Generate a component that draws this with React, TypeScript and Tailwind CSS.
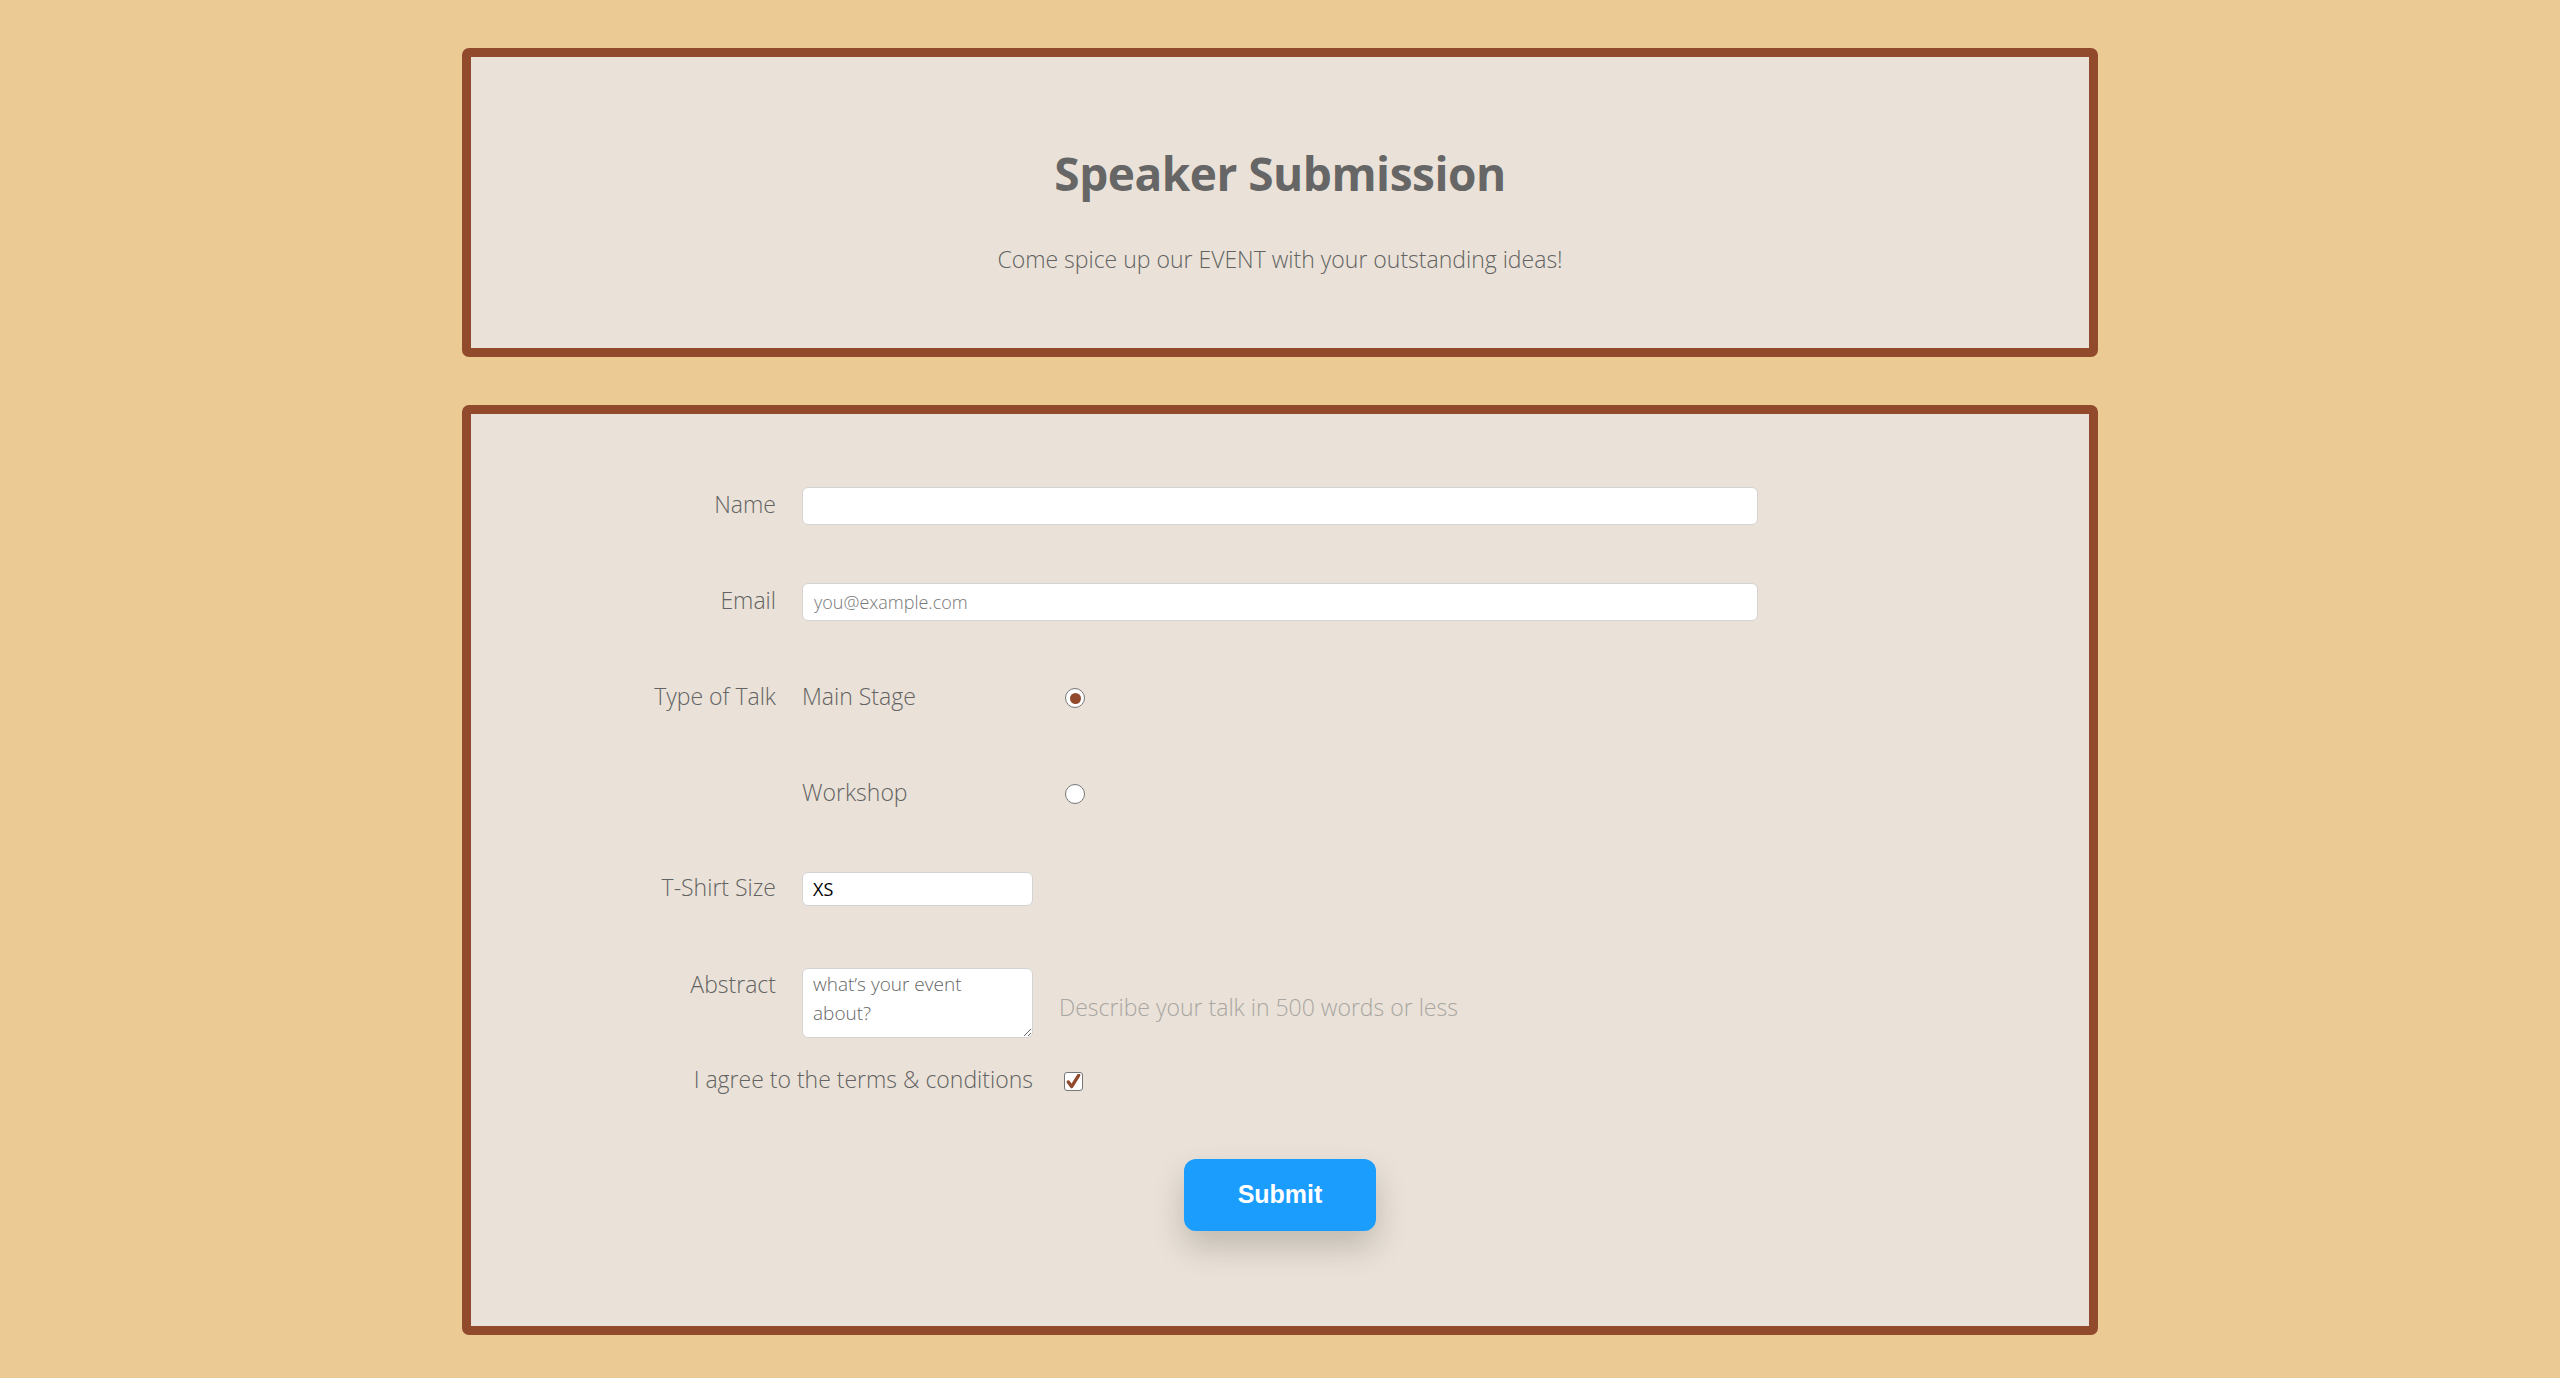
import { useState } from "react";

const font = { fontFamily: '"Open Sans", "Noto Sans", sans-serif' };

function Radio({ checked, onClick }: { checked: boolean; onClick: () => void }) {
  return (
    <button
      type="button"
      onClick={onClick}
      className="ml-[6px] w-[20px] h-[20px] rounded-full border-[1.5px] border-[#767676] bg-white grid place-items-center"
    >
      {checked ? <span className="w-[11px] h-[11px] rounded-full bg-[#924a2d]" /> : null}
    </button>
  );
}

export default function App() {
  const [talk, setTalk] = useState("main");
  const [agree, setAgree] = useState(true);

  return (
    <div className="min-h-[1378px] bg-[#ebcb93] pt-[48px] pb-[43px] text-[#636363]" style={font}>
      {/* header card */}
      <div className="mx-auto w-[1636px] h-[309px] border-[9px] border-[#924a2d] rounded-[7px] bg-[#eae2d8] flex flex-col items-center pt-[86px]">
        <h1 className="text-[46px] leading-[60px] font-bold tracking-[-0.5px] text-[#666]">Speaker Submission</h1>
        <p className="mt-[40px] text-[23px] leading-[32px] font-light">
          Come spice up our EVENT with your outstanding ideas!
        </p>
      </div>

      {/* form card */}
      <div className="mx-auto mt-[48px] w-[1636px] h-[930px] border-[9px] border-[#924a2d] rounded-[7px] bg-[#eae2d8] pt-[73px]">
        <form className="flex flex-col text-[23px] font-light">
          <div className="grid grid-cols-[305px_956px] gap-x-[26px] items-center h-[38px]">
            <label className="text-right pb-[3px]">Name</label>
            <input className="h-[38px] rounded-[6px] border border-[#d3d3d3] bg-white px-[11px] text-[18px] outline-none" />
          </div>

          <div className="mt-[58px] grid grid-cols-[305px_956px] gap-x-[26px] items-center h-[38px]">
            <label className="text-right pb-[3px]">Email</label>
            <input
              placeholder="you@example.com"
              className="h-[38px] rounded-[6px] border border-[#d3d3d3] bg-white px-[11px] text-[18px] placeholder:text-[#777] outline-none"
            />
          </div>

          <div className="mt-[58px] grid grid-cols-[305px_231px_700px] gap-x-[26px] items-center h-[38px]">
            <label className="text-right pb-[3px]">Type of Talk</label>
            <span className="pb-[3px]">Main Stage</span>
            <div className="flex items-center">
              <Radio checked={talk === "main"} onClick={() => setTalk("main")} />
            </div>
          </div>

          <div className="mt-[58px] grid grid-cols-[305px_231px_700px] gap-x-[26px] items-center h-[38px]">
            <span />
            <span className="pb-[3px]">Workshop</span>
            <div className="flex items-center">
              <Radio checked={talk === "workshop"} onClick={() => setTalk("workshop")} />
            </div>
          </div>

          <div className="mt-[57px] grid grid-cols-[305px_231px_700px] gap-x-[26px] items-center h-[38px]">
            <label className="text-right pb-[3px]">T-Shirt Size</label>
            <div className="h-[34px] rounded-[6px] border border-[#d3d3d3] bg-white px-[10px] flex items-center text-[18px] font-normal text-black">
              XS
            </div>
            <span />
          </div>

          <div className="mt-[60px] grid grid-cols-[305px_231px_700px] gap-x-[26px] items-start">
            <label className="text-right leading-[32px]">Abstract</label>
            <textarea
              placeholder="what’s your event about?"
              className="h-[70px] rounded-[6px] border border-[#d3d3d3] bg-white px-[10px] py-[1px] text-[19px] leading-[29px] placeholder:text-[#666] outline-none resize"
            />
            <span className="pt-[23px] leading-[32px] text-[#a9a6a2]">Describe your talk in 500 words or less</span>
          </div>

          <div className="mt-[24px] grid grid-cols-[562px_700px] gap-x-[26px] items-center h-[38px]">
            <label className="text-right pb-[3px]">I agree to the terms &amp; conditions</label>
            <button
              type="button"
              onClick={() => setAgree(!agree)}
              className="ml-[5px] w-[19px] h-[19px] rounded-[3px] border-[1.5px] border-[#767676] bg-white grid place-items-center"
            >
              {agree ? (
                <svg viewBox="0 0 16 16" className="w-[15px] h-[15px]">
                  <path d="M2.5 8.5 L6 13.5 L13.5 1.5" fill="none" stroke="#924a2d" strokeWidth="3.6" strokeLinecap="round" strokeLinejoin="round" />
                </svg>
              ) : null}
            </button>
          </div>

          <div className="mt-[59px] flex justify-center">
            <button
              type="button"
              className="w-[192px] h-[72px] rounded-[12px] bg-[#1b9dfe] text-white text-[25px] font-bold shadow-[0_16px_32px_rgba(0,0,0,0.18)]"
              style={{ fontFamily: '"Liberation Sans", Arial, sans-serif' }}
            >
              Submit
            </button>
          </div>
        </form>
      </div>
    </div>
  );
}
